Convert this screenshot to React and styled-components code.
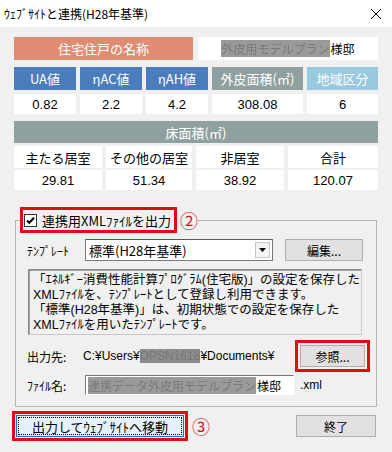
import React from 'react'
import styled, { createGlobalStyle } from 'styled-components'

const GlobalStyle = createGlobalStyle`
  html, body {
    margin: 0;
    padding: 0;
    background: #f0f0f0;
  }
  body {
    font-family: "Noto Sans CJK JP", "Noto Sans", sans-serif;
    color: #000;
  }
`;

const perfData = [
    { label: 'UA値', value: '0.82', color: '#4b7dbd' },
    { label: 'ηAC値', value: '2.2', color: '#4b7dbd' },
    { label: 'ηAH値', value: '4.2', color: '#4b7dbd' },
    { label: '外皮面積(㎡)', value: '308.08', color: '#8fa0a0' },
    { label: '地域区分', value: '6', color: '#99c9e0' },
];

const floorData = [
    { label: '主たる居室', value: '29.81' },
    { label: 'その他の居室', value: '51.34' },
    { label: '非居室', value: '38.92' },
    { label: '合計', value: '120.07' },
];

const descLines = [
    '「ｴﾈﾙｷﾞｰ消費性能計算ﾌﾟﾛｸﾞﾗﾑ(住宅版)」の設定を保存した',
    'XMLﾌｧｲﾙを、ﾃﾝﾌﾟﾚｰﾄとして登録し利用できます。',
    '「標準(H28年基準)」は、初期状態での設定を保存した',
    'XMLﾌｧｲﾙを用いたﾃﾝﾌﾟﾚｰﾄです。',
];

const CheckIcon = () => (
    <svg width="13" height="13" viewBox="0 0 13 13">
        <rect x="0.5" y="0.5" width="12" height="12" fill="#fff" stroke="#333" />
        <path d="M3 6.5 L5.3 8.8 L10 3.8" fill="none" stroke="#000" strokeWidth="2" />
    </svg>
);

const ArrowIcon = () => (
    <svg width="7" height="4" viewBox="0 0 7 4">
        <path d="M0 0 H7 L3.5 4 Z" fill="#000" />
    </svg>
);

const CloseIcon = () => (
    <svg width="10" height="10" viewBox="0 0 10 10">
        <path d="M0 0 L10 10 M10 0 L0 10" stroke="#000" strokeWidth="1" />
    </svg>
);

export default function App() {
    return (
        <Page>
            <GlobalStyle />
            <TitleBar>
                <span>ｳｪﾌﾞｻｲﾄと連携(H28年基準)</span>
                <CloseIcon />
            </TitleBar>
            <Main>
                <NameRow>
                    <ColorCell $bg="#e08c72">住宅住戸の名称</ColorCell>
                    <NameCell>
                        <Masked>外皮用モデルプラン</Masked>様邸
                    </NameCell>
                </NameRow>

                <PerfGrid>
                    {perfData.map((item) => (
                        <ColorCell key={item.label} $bg={item.color}>{item.label}</ColorCell>
                    ))}
                    {perfData.map((item) => (
                        <ValueCell key={item.label + 'v'}>{item.value}</ValueCell>
                    ))}
                </PerfGrid>

                <FloorHeader>床面積(㎡)</FloorHeader>
                <FloorGrid>
                    {floorData.map((item) => (
                        <LabelCell key={item.label}>{item.label}</LabelCell>
                    ))}
                    {floorData.map((item) => (
                        <ValueCell key={item.label + 'v'}>{item.value}</ValueCell>
                    ))}
                </FloorGrid>

                <Group>
                    <Legend>
                        <RedFrame>
                            <CheckLabel>
                                <CheckIcon />
                                連携用XMLﾌｧｲﾙを出力
                            </CheckLabel>
                        </RedFrame>
                        <Mark>②</Mark>
                    </Legend>

                    <TemplateRow>
                        <FieldLabel>ﾃﾝﾌﾟﾚｰﾄ</FieldLabel>
                        <Select>
                            <span>標準(H28年基準)</span>
                            <SelectArrow><ArrowIcon /></SelectArrow>
                        </Select>
                        <Button $width={78}>編集...</Button>
                    </TemplateRow>

                    <Description>
                        {descLines.map((line) => (
                            <DescLine key={line}>{line}</DescLine>
                        ))}
                    </Description>

                    <OutputRow>
                        <FieldLabel>出力先:</FieldLabel>
                        <PathText>
                            C:¥Users¥<MaskedDark>OPSN1618</MaskedDark>¥Documents¥
                        </PathText>
                        <RedFrame $pad={2}>
                            <Button $width={65}>参照...</Button>
                        </RedFrame>
                    </OutputRow>

                    <FileRow>
                        <FieldLabel>ﾌｧｲﾙ名:</FieldLabel>
                        <Input>
                            <Masked>連携データ外皮用モデルプラン</Masked>様邸
                        </Input>
                        <Ext>.xml</Ext>
                    </FileRow>
                </Group>

                <BottomRow>
                    <BottomLeft>
                        <RedFrame $pad={1}>
                            <PrimaryButton>出力してｳｪﾌﾞｻｲﾄへ移動</PrimaryButton>
                        </RedFrame>
                        <Mark>③</Mark>
                    </BottomLeft>
                    <Button $width={80}>終了</Button>
                </BottomRow>
            </Main>
        </Page>
    );
}

const Page = styled.div`
    width: 392px;
    height: 452px;
    background: #f0f0f0;
    overflow: hidden;
`;

const TitleBar = styled.div`
    height: 27px;
    background: #fff;
    display: flex;
    align-items: center;
    justify-content: space-between;
    padding: 0 11px 0 4px;
    font-size: 12px;
    line-height: 14px;
`;

const Main = styled.div`
    display: flex;
    flex-direction: column;
    padding: 10px 14px 0 14px;
`;

const Cell = styled.div`
    display: flex;
    align-items: center;
    justify-content: center;
    white-space: nowrap;
`;

const ColorCell = styled(Cell)`
    background: ${(p) => p.$bg};
    color: #fff;
    font-size: 13px;
`;

const NameRow = styled.div`
    display: grid;
    grid-template-columns: 179px 180px;
    column-gap: 5px;
    height: 23px;
`;

const NameCell = styled(Cell)`
    background: #fff;
    font-size: 12px;
`;

const Masked = styled.span`
    background: #9a9a9a;
    color: #7a7a7a;
    filter: blur(0.4px);
    margin-right: 1px;
`;

const MaskedDark = styled.span`
    background: #8c8c8c;
    color: #777;
    filter: blur(0.4px);
`;

const PerfGrid = styled.div`
    display: grid;
    grid-template-columns: 62px 62px 62px 91px 71px;
    grid-template-rows: 23px 20px;
    column-gap: 4px;
    row-gap: 4px;
    margin-top: 7px;
`;

const ValueCell = styled(Cell)`
    background: #fff;
    font-size: 13px;
    font-family: "Liberation Sans", "Noto Sans CJK JP", sans-serif;
`;

const FloorHeader = styled(Cell)`
    margin-top: 7px;
    height: 22px;
    background: #8fa0a0;
    color: #fff;
    font-size: 13px;
`;

const FloorGrid = styled.div`
    display: grid;
    grid-template-columns: 88px 86px 88px 90px;
    grid-template-rows: 22px 20px;
    column-gap: 4px;
    row-gap: 2px;
    margin-top: 3px;
`;

const LabelCell = styled(Cell)`
    background: #fff;
    font-size: 13px;
`;

const Group = styled.fieldset`
    margin: 17px 0 0 1px;
    width: 362px;
    box-sizing: border-box;
    padding: 0 0 11px 0;
    border: 1px solid #b4b4b4;
    min-width: 0;
`;

const Legend = styled.legend`
    display: flex;
    align-items: center;
    gap: 3px;
    padding: 0;
    margin-left: 4px;
`;

const RedFrame = styled.div`
    border: 3px solid #e00b16;
    padding: ${(p) => p.$pad ?? 0}px;
    display: flex;
`;

const CheckLabel = styled.div`
    display: flex;
    align-items: center;
    gap: 5px;
    height: 20px;
    padding: 0 3px 0 1px;
    font-size: 13px;
    white-space: nowrap;
`;

const Mark = styled.span`
    color: #e00b16;
    font-size: 18px;
    line-height: 18px;
`;

const TemplateRow = styled.div`
    display: flex;
    align-items: center;
    margin-top: 6px;
    padding-left: 11px;
    height: 22px;
`;

const FieldLabel = styled.span`
    width: 56px;
    flex-shrink: 0;
    font-size: 12px;
    white-space: nowrap;
`;

const Select = styled.div`
    width: 188px;
    height: 22px;
    box-sizing: border-box;
    border: 1px solid #7a7a7a;
    border-top-color: #5a5a5a;
    background: #fff;
    display: flex;
    align-items: center;
    justify-content: space-between;
    padding: 0 2px 0 3px;
    font-size: 13px;
    margin: 0 12px 0 2px;
`;

const SelectArrow = styled.span`
    width: 15px;
    height: 16px;
    box-sizing: border-box;
    border: 1px solid #c8c8c8;
    background: #f4f4f4;
    display: flex;
    align-items: center;
    justify-content: center;
`;

const Button = styled.div`
    width: ${(p) => p.$width}px;
    height: 22px;
    box-sizing: border-box;
    border: 1px solid #adadad;
    background: #e1e1e1;
    display: flex;
    align-items: center;
    justify-content: center;
    font-size: 12px;
`;

const Description = styled.div`
    margin: 8px 0 0 12px;
    width: 334px;
    height: 66px;
    box-sizing: border-box;
    border: 1px solid #8a8a8a;
    border-right-color: #c8c8c8;
    border-bottom-color: #c8c8c8;
    box-shadow: inset 1px 1px 0 #a0a0a0;
    padding: 3px 2px 0 4px;
    display: flex;
    flex-direction: column;
`;

const DescLine = styled.div`
    height: 15px;
    font-family: "Liberation Sans", "Noto Sans CJK JP", sans-serif;
    font-size: 12.5px;
    line-height: 15px;
    white-space: nowrap;
`;

const OutputRow = styled.div`
    display: flex;
    align-items: center;
    margin-top: 5px;
    padding-left: 11px;
`;

const PathText = styled.span`
    width: 212px;
    flex-shrink: 0;
    font-size: 12px;
    white-space: nowrap;
    font-family: "Liberation Sans", "Noto Sans CJK JP", sans-serif;
`;

const FileRow = styled.div`
    display: flex;
    align-items: center;
    margin-top: 3px;
    padding-left: 11px;
`;

const Input = styled.div`
    width: 209px;
    height: 20px;
    box-sizing: border-box;
    border: 1px solid #7a7a7a;
    border-right-color: #fff;
    border-bottom-color: #fff;
    background: #fff;
    display: flex;
    align-items: center;
    padding-left: 2px;
    margin-left: 2px;
    font-size: 12px;
    white-space: nowrap;
    overflow: hidden;
`;

const Ext = styled.span`
    margin-left: 6px;
    font-size: 12px;
    font-family: "Liberation Sans", sans-serif;
`;

const BottomRow = styled.div`
    display: flex;
    align-items: center;
    justify-content: space-between;
    margin: 4px 2px 0 -2px;
`;

const BottomLeft = styled.div`
    display: flex;
    align-items: center;
    gap: 4px;
`;

const PrimaryButton = styled.div`
    width: 168px;
    height: 22px;
    box-sizing: border-box;
    border: 1px solid #0078d7;
    background: #e5f1fb;
    outline: 1px dotted #000;
    outline-offset: -3px;
    display: flex;
    align-items: center;
    justify-content: center;
    font-size: 13px;
`;
